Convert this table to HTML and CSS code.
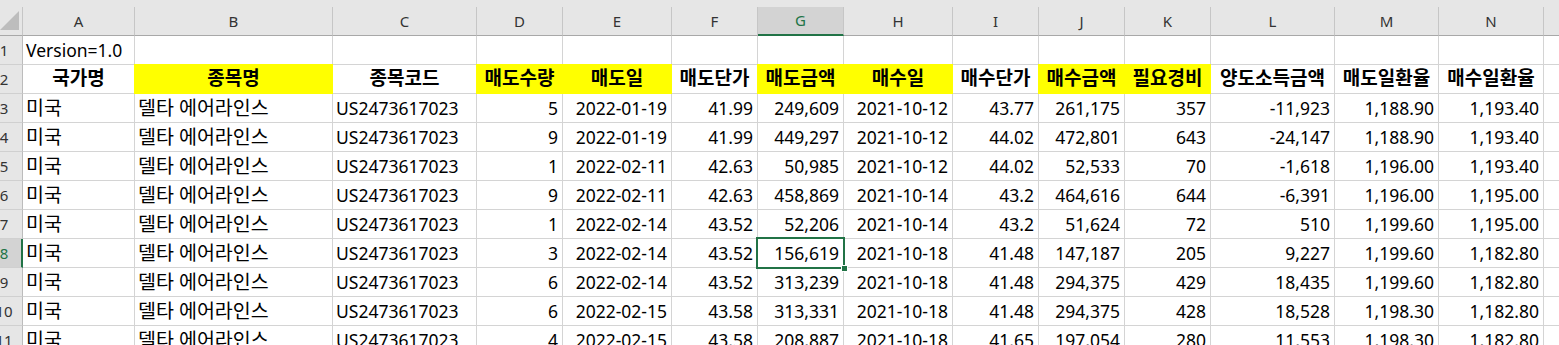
FILE: index.html
```html
<!DOCTYPE html>
<html>
<head>
  <meta charset="utf-8" />
  <title>양도소득 계산</title>
  <link rel="stylesheet" href="styles.css">
</head>
<body>
<div class="sheet">
  <div class="strip"></div>

  <!-- column headers -->
  <div class="ch corner">
    <svg width="22" height="28" viewBox="0 0 22 28"><polygon points="19,4 19,23 0,23" fill="#bdbdbd"/></svg>
  </div>
  <div class="ch">A</div><div class="ch">B</div><div class="ch">C</div><div class="ch">D</div>
  <div class="ch">E</div><div class="ch">F</div><div class="ch act">G</div><div class="ch">H</div>
  <div class="ch">I</div><div class="ch">J</div><div class="ch">K</div><div class="ch">L</div>
  <div class="ch">M</div><div class="ch">N</div><div class="ch last"></div>

  <!-- row 1 -->
  <div class="rh"><span>1</span></div>
  <div class="c">Version=1.0</div><div class="c"></div><div class="c"></div><div class="c"></div>
  <div class="c"></div><div class="c"></div><div class="c"></div><div class="c"></div>
  <div class="c"></div><div class="c"></div><div class="c"></div><div class="c"></div>
  <div class="c"></div><div class="c"></div><div class="c"></div>

  <!-- row 2 -->
  <div class="rh"><span>2</span></div>
  <div class="c h">국가명</div>
  <div class="c h y">종목명</div>
  <div class="c h">종목코드</div>
  <div class="c h y">매도수량</div>
  <div class="c h y">매도일</div>
  <div class="c h">매도단가</div>
  <div class="c h y">매도금액</div>
  <div class="c h y">매수일</div>
  <div class="c h">매수단가</div>
  <div class="c h y">매수금액</div>
  <div class="c h y">필요경비</div>
  <div class="c h">양도소득금액</div>
  <div class="c h">매도일환율</div>
  <div class="c h">매수일환율</div>
  <div class="c"></div>

  <!-- row 3 -->
  <div class="rh"><span>3</span></div>
  <div class="c k">미국</div><div class="c k">델타 에어라인스</div><div class="c">US2473617023</div>
  <div class="c n">5</div><div class="c n">2022-01-19</div><div class="c n">41.99</div><div class="c n">249,609</div>
  <div class="c n">2021-10-12</div><div class="c n">43.77</div><div class="c n">261,175</div><div class="c n">357</div>
  <div class="c n">-11,923</div><div class="c n">1,188.90</div><div class="c n">1,193.40</div><div class="c"></div>

  <!-- row 4 -->
  <div class="rh"><span>4</span></div>
  <div class="c k">미국</div><div class="c k">델타 에어라인스</div><div class="c">US2473617023</div>
  <div class="c n">9</div><div class="c n">2022-01-19</div><div class="c n">41.99</div><div class="c n">449,297</div>
  <div class="c n">2021-10-12</div><div class="c n">44.02</div><div class="c n">472,801</div><div class="c n">643</div>
  <div class="c n">-24,147</div><div class="c n">1,188.90</div><div class="c n">1,193.40</div><div class="c"></div>

  <!-- row 5 -->
  <div class="rh"><span>5</span></div>
  <div class="c k">미국</div><div class="c k">델타 에어라인스</div><div class="c">US2473617023</div>
  <div class="c n">1</div><div class="c n">2022-02-11</div><div class="c n">42.63</div><div class="c n">50,985</div>
  <div class="c n">2021-10-12</div><div class="c n">44.02</div><div class="c n">52,533</div><div class="c n">70</div>
  <div class="c n">-1,618</div><div class="c n">1,196.00</div><div class="c n">1,193.40</div><div class="c"></div>

  <!-- row 6 -->
  <div class="rh"><span>6</span></div>
  <div class="c k">미국</div><div class="c k">델타 에어라인스</div><div class="c">US2473617023</div>
  <div class="c n">9</div><div class="c n">2022-02-11</div><div class="c n">42.63</div><div class="c n">458,869</div>
  <div class="c n">2021-10-14</div><div class="c n">43.2</div><div class="c n">464,616</div><div class="c n">644</div>
  <div class="c n">-6,391</div><div class="c n">1,196.00</div><div class="c n">1,195.00</div><div class="c"></div>

  <!-- row 7 -->
  <div class="rh"><span>7</span></div>
  <div class="c k">미국</div><div class="c k">델타 에어라인스</div><div class="c">US2473617023</div>
  <div class="c n">1</div><div class="c n">2022-02-14</div><div class="c n">43.52</div><div class="c n">52,206</div>
  <div class="c n">2021-10-14</div><div class="c n">43.2</div><div class="c n">51,624</div><div class="c n">72</div>
  <div class="c n">510</div><div class="c n">1,199.60</div><div class="c n">1,195.00</div><div class="c"></div>

  <!-- row 8 (active) -->
  <div class="rh act"><span>8</span></div>
  <div class="c k">미국</div><div class="c k">델타 에어라인스</div><div class="c">US2473617023</div>
  <div class="c n">3</div><div class="c n">2022-02-14</div><div class="c n">43.52</div><div class="c n sel">156,619</div>
  <div class="c n">2021-10-18</div><div class="c n">41.48</div><div class="c n">147,187</div><div class="c n">205</div>
  <div class="c n">9,227</div><div class="c n">1,199.60</div><div class="c n">1,182.80</div><div class="c"></div>

  <!-- row 9 -->
  <div class="rh"><span>9</span></div>
  <div class="c k">미국</div><div class="c k">델타 에어라인스</div><div class="c">US2473617023</div>
  <div class="c n">6</div><div class="c n">2022-02-14</div><div class="c n">43.52</div><div class="c n">313,239</div>
  <div class="c n">2021-10-18</div><div class="c n">41.48</div><div class="c n">294,375</div><div class="c n">429</div>
  <div class="c n">18,435</div><div class="c n">1,199.60</div><div class="c n">1,182.80</div><div class="c"></div>

  <!-- row 10 -->
  <div class="rh"><span>10</span></div>
  <div class="c k">미국</div><div class="c k">델타 에어라인스</div><div class="c">US2473617023</div>
  <div class="c n">6</div><div class="c n">2022-02-15</div><div class="c n">43.58</div><div class="c n">313,331</div>
  <div class="c n">2021-10-18</div><div class="c n">41.48</div><div class="c n">294,375</div><div class="c n">428</div>
  <div class="c n">18,528</div><div class="c n">1,198.30</div><div class="c n">1,182.80</div><div class="c"></div>

  <!-- row 11 -->
  <div class="rh"><span>11</span></div>
  <div class="c k">미국</div><div class="c k">델타 에어라인스</div><div class="c">US2473617023</div>
  <div class="c n">4</div><div class="c n">2022-02-15</div><div class="c n">43.58</div><div class="c n">208,887</div>
  <div class="c n">2021-10-18</div><div class="c n">41.65</div><div class="c n">197,054</div><div class="c n">280</div>
  <div class="c n">11,553</div><div class="c n">1,198.30</div><div class="c n">1,182.80</div><div class="c"></div>
</div>
</body>
</html>
```

FILE: styles.css
```css
body {
  margin: 0;
  padding: 0;
  background: #fff;
  color: #000;
  font-family: "Noto Sans", "Noto Sans CJK KR", sans-serif;
  font-size: 17.5px;
  overflow: hidden;
}
.sheet {
  display: grid;
  grid-template-columns: 23px 112px 198px 144px 86px 109px 86px 86px 109px 86px 86px 86px 124px 104px 105px 16px;
  grid-template-rows: 7px repeat(12, 29px);
  width: 1560px;
}
.strip {
  grid-column: 1 / -1;
  background: #e6e6e6;
}

/* column headers */
.ch {
  box-sizing: border-box;
  background: #e6e6e6;
  border-right: 1px solid #c6c6c6;
  border-bottom: 1px solid #a8a8a8;
  color: #333;
  font-size: 15px;
  line-height: 28px;
  text-align: center;
}
.ch.act {
  background: #d3d3d3;
  color: #217346;
  border-bottom: 2px solid #217346;
  line-height: 27px;
}
.ch.last {
  border-right: none;
}
.corner svg {
  display: block;
}

/* row headers */
.rh {
  box-sizing: border-box;
  background: #e6e6e6;
  border-right: 1px solid #bcbcbc;
  border-bottom: 1px solid #d0d0d0;
  color: #333;
  font-size: 15px;
  line-height: 28px;
  overflow: hidden;
}
.rh span {
  display: block;
  width: 36px;
  margin-left: -14px;
  text-align: center;
}
.rh.act {
  background: #d3d3d3;
  color: #217346;
  border-right: 2px solid #217346;
}

/* cells */
.c {
  box-sizing: border-box;
  border-right: 1px solid #d4d4d4;
  border-bottom: 1px solid #d4d4d4;
  padding: 0 4px 0 3px;
  line-height: 28px;
  white-space: nowrap;
  overflow: hidden;
}
.k {
  font-size: 19.5px;
  line-height: 27px;
}
.n {
  text-align: right;
}
.h {
  font-weight: 700;
  font-size: 19px;
  line-height: 27px;
  text-align: center;
  padding: 0;
}
.y {
  background: #ffff00;
  border-color: #ffff00;
  box-shadow: 0 -1px 0 #ffff00, -1px 0 0 #ffff00, -1px -1px 0 #ffff00;
}
.sel {
  position: relative;
  overflow: visible;
}
.sel::after {
  content: "";
  position: absolute;
  top: -2px;
  left: -2px;
  right: -2px;
  bottom: -2px;
  border: 2px solid #217346;
}
.sel::before {
  content: "";
  position: absolute;
  right: -5px;
  bottom: -5px;
  width: 7px;
  height: 7px;
  box-sizing: border-box;
  background: #217346;
  border: 1px solid #fff;
  z-index: 1;
}
```
